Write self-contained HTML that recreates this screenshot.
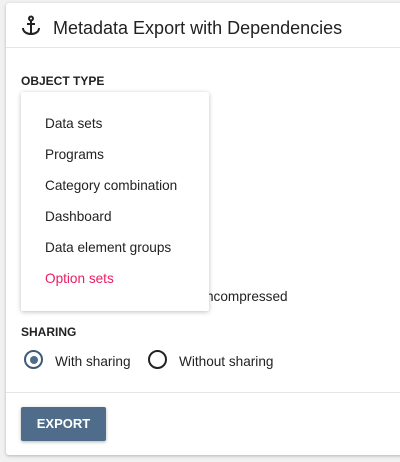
<!DOCTYPE html>
<html><head><style>
body{margin:0;width:400px;height:462px;background:#f1f1f1;font-family:"Liberation Sans",sans-serif;position:relative;overflow:hidden;color:#222}
.card{position:absolute;left:6px;top:3px;width:400px;height:452px;background:#fff;border-radius:3px;box-shadow:0 1px 3px rgba(0,0,0,.25)}
.t{position:absolute;white-space:nowrap}
.menu{position:absolute;left:21px;top:92px;width:188px;height:219px;background:#fff;border-radius:2px;box-shadow:0 1px 5px rgba(0,0,0,.25)}
.mi{position:absolute;left:24px;font-size:13.6px;color:#222}
.radio{position:absolute;width:19px;height:19px;border:2px solid #222;border-radius:50%;box-sizing:border-box}
</style></head><body>
<div class="card">
<svg style="position:absolute;left:15px;top:12px" width="20" height="22" viewBox="0 0 20 22"><g fill="none" stroke="#222" stroke-width="2"><circle cx="10" cy="3.5" r="2"/><path d="M10 5.5V19M2 13c0 4 4 6 8 6s8-2 8-6M6 9h8"/></g></svg>
<div class="t" style="left:47px;top:15px;font-size:18px;color:#222">Metadata Export with Dependencies</div>
<div style="position:absolute;left:0;right:0;top:44px;border-top:1px solid #e4e4e4"></div>
<div class="t" style="left:15px;top:71px;font-size:12px;font-weight:bold">OBJECT TYPE</div>
<div class="t" style="left:200px;top:286px;font-size:13.6px">ncompressed</div>
<div class="t" style="left:15px;top:322px;font-size:12px;font-weight:bold">SHARING</div>
<div class="radio" style="left:18px;top:347px;border-color:#3d5a78"><div style="position:absolute;left:3.5px;top:3.5px;width:8px;height:8px;border-radius:50%;background:#4f6d8a"></div></div>
<div class="t" style="left:49px;top:351px;font-size:13.6px">With sharing</div>
<div class="radio" style="left:142px;top:347px"></div>
<div class="t" style="left:173px;top:351px;font-size:13.6px">Without sharing</div>
<div style="position:absolute;left:0;right:0;top:389px;border-top:1px solid #e4e4e4"></div>
<div style="position:absolute;left:15px;top:404px;width:85px;height:34px;background:#4f6d8a;border-radius:2px;box-shadow:0 1px 3px rgba(0,0,0,.3);color:#fff;font-weight:bold;font-size:13px;text-align:center;line-height:34px">EXPORT</div>
</div>
<div class="menu">
<div class="mi" style="top:24px">Data sets</div>
<div class="mi" style="top:55px">Programs</div>
<div class="mi" style="top:86px">Category combination</div>
<div class="mi" style="top:117px">Dashboard</div>
<div class="mi" style="top:148px">Data element groups</div>
<div class="mi" style="top:179px;color:#e91e63">Option sets</div>
</div>
</body></html>
